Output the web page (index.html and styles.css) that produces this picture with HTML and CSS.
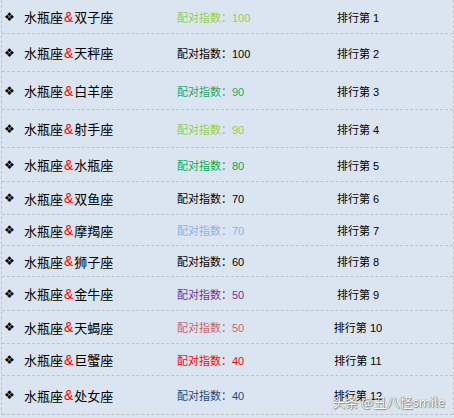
FILE: index.html
```html
<!DOCTYPE html>
<html lang="zh">
<head>
<meta charset="utf-8">
<title>水瓶座配对</title>
<link rel="stylesheet" href="styles.css">
</head>
<body>
<div class="page">
  <ul class="list">
    <li class="row"><span class="name"><span class="dot">❖</span>水瓶座<span class="amp">&amp;</span>双子座</span><span class="score c-lime">配对指数：100</span><span class="rank">排行第 1</span></li>
    <li class="row"><span class="name"><span class="dot">❖</span>水瓶座<span class="amp">&amp;</span>天秤座</span><span class="score c-black">配对指数：100</span><span class="rank">排行第 2</span></li>
    <li class="row"><span class="name"><span class="dot">❖</span>水瓶座<span class="amp">&amp;</span>白羊座</span><span class="score c-teal">配对指数：90</span><span class="rank">排行第 3</span></li>
    <li class="row"><span class="name"><span class="dot">❖</span>水瓶座<span class="amp">&amp;</span>射手座</span><span class="score c-lime">配对指数：90</span><span class="rank">排行第 4</span></li>
    <li class="row"><span class="name"><span class="dot">❖</span>水瓶座<span class="amp">&amp;</span>水瓶座</span><span class="score c-green">配对指数：80</span><span class="rank">排行第 5</span></li>
    <li class="row"><span class="name"><span class="dot">❖</span>水瓶座<span class="amp">&amp;</span>双鱼座</span><span class="score c-black">配对指数：70</span><span class="rank">排行第 6</span></li>
    <li class="row"><span class="name"><span class="dot">❖</span>水瓶座<span class="amp">&amp;</span>摩羯座</span><span class="score c-sky">配对指数：70</span><span class="rank">排行第 7</span></li>
    <li class="row"><span class="name"><span class="dot">❖</span>水瓶座<span class="amp">&amp;</span>狮子座</span><span class="score c-black">配对指数：60</span><span class="rank">排行第 8</span></li>
    <li class="row"><span class="name"><span class="dot">❖</span>水瓶座<span class="amp">&amp;</span>金牛座</span><span class="score c-purple">配对指数：50</span><span class="rank">排行第 9</span></li>
    <li class="row"><span class="name"><span class="dot">❖</span>水瓶座<span class="amp">&amp;</span>天蝎座</span><span class="score c-rose">配对指数：50</span><span class="rank">排行第 10</span></li>
    <li class="row"><span class="name"><span class="dot">❖</span>水瓶座<span class="amp">&amp;</span>巨蟹座</span><span class="score c-red">配对指数：40</span><span class="rank">排行第 11</span></li>
    <li class="row"><span class="name"><span class="dot">❖</span>水瓶座<span class="amp">&amp;</span>处女座</span><span class="score c-navy">配对指数：40</span><span class="rank">排行第 12</span></li>
  </ul>
  <div class="watermark">头条 @丑八怪smile</div>
</div>
</body>
</html>
```

FILE: styles.css
```css
html, body {
  margin: 0;
  padding: 0;
  background: #dbe5f1;
}

.page {
  position: relative;
  width: 454px;
  height: 418px;
  overflow: hidden;
  font-family: "Liberation Sans", "Noto Sans CJK SC", sans-serif;
  color: #000;
}

.list {
  list-style: none;
  margin: 0 0 0 1px;
  padding: 0;
  width: 453px;
  box-sizing: border-box;
  border-left: 1px dashed #c4c4c4;
  border-right: 1px dashed #c4c4c4;
}

.row {
  display: grid;
  grid-template-columns: 175px 123px 116px 1fr;
  align-items: center;
  box-sizing: border-box;
  border-bottom: 1px dashed #c4c4c4;
  height: 33px;
}

.row:nth-child(1) { height: 34px; }
.row:nth-child(2) { height: 38px; }
.row:nth-child(3) { height: 38px; }
.row:nth-child(4) { height: 38px; }
.row:nth-child(5) { height: 34px; }
.row:nth-child(6) { height: 33px; }
.row:nth-child(7) { height: 31px; }
.row:nth-child(8) { height: 31px; }
.row:nth-child(9) { height: 34px; }
.row:nth-child(10) { height: 33px; }
.row:nth-child(11) { height: 32px; }
.row:nth-child(12) { height: 39px; }

.name {
  display: flex;
  align-items: center;
  padding-left: 2px;
  font-size: 13px;
  white-space: nowrap;
}

.dot {
  display: inline-block;
  width: 20px;
  font-family: "DejaVu Sans", sans-serif;
  font-size: 12px;
  line-height: 12px;
  color: #000;
}

.amp {
  color: #ff0000;
  font-family: "Liberation Sans", sans-serif;
  font-size: 14px;
  padding: 0 1px;
}

.score {
  font-size: 11px;
  white-space: nowrap;
}

.rank {
  font-size: 11px;
  text-align: center;
  white-space: nowrap;
}

.c-lime { color: #92d050; }
.c-black { color: #000; }
.c-teal { color: #1ea86a; }
.c-green { color: #00b050; }
.c-sky { color: #8db3e2; }
.c-purple { color: #7030a0; }
.c-rose { color: #c9646e; }
.c-red { color: #ff0000; }
.c-navy { color: #1f497d; }

.watermark {
  position: absolute;
  right: 9px;
  bottom: 8px;
  font-family: "Noto Sans CJK SC", sans-serif;
  font-size: 13px;
  line-height: 16px;
  color: #fff;
  text-shadow: 0 0 1px rgba(0, 0, 0, 0.7), 1px 1px 1px rgba(0, 0, 0, 0.35);
  white-space: nowrap;
}
```
